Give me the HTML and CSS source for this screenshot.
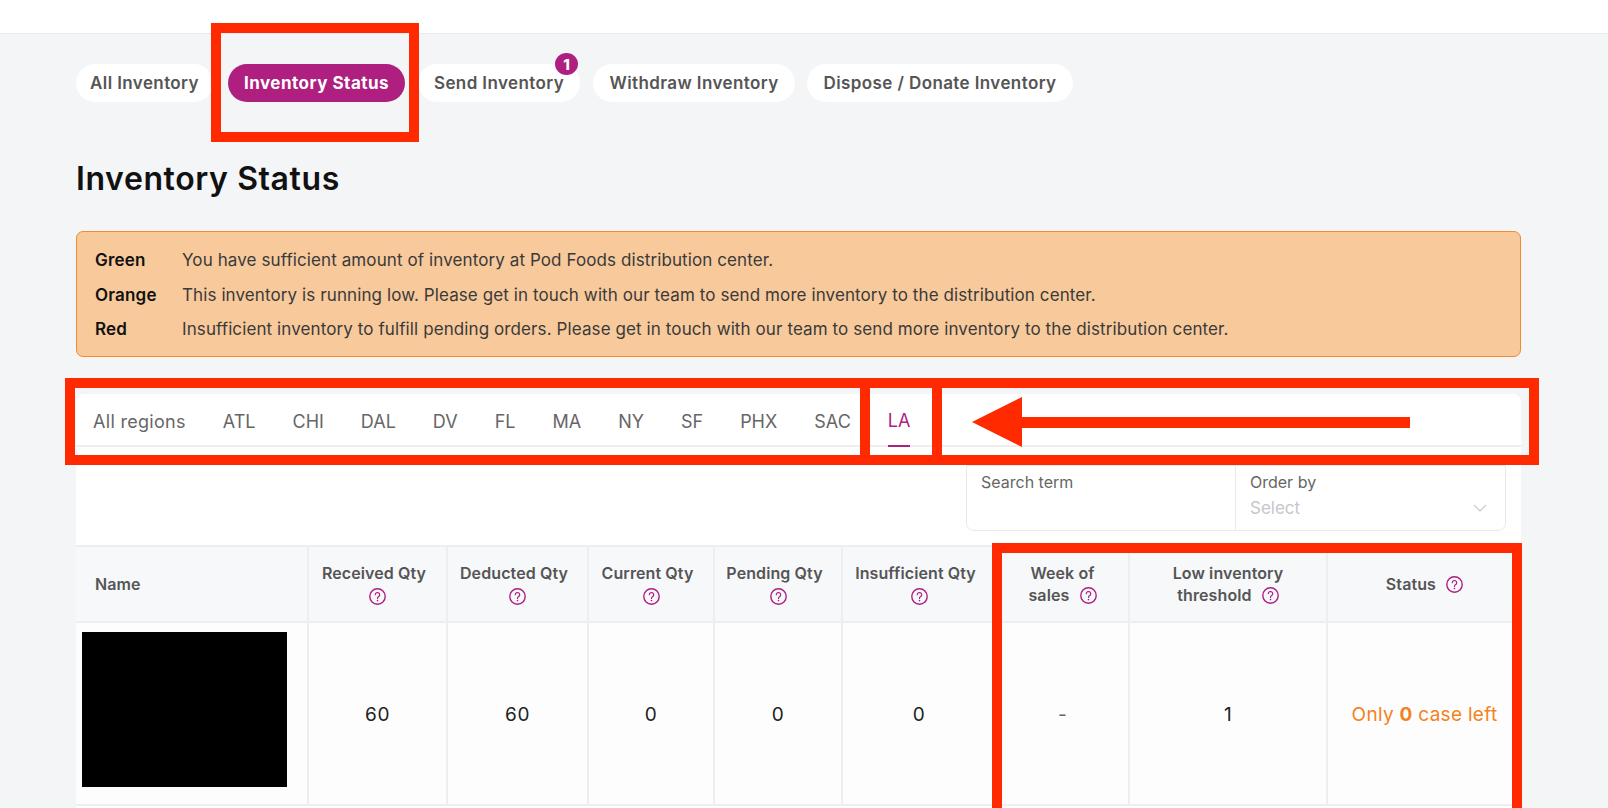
FILE: index.html
```html
<!DOCTYPE html>
<html lang="en">
<head>
<meta charset="utf-8">
<title>Inventory Status</title>
<link rel="stylesheet" href="styles.css">
</head>
<body>
<svg class="defs" width="0" height="0" aria-hidden="true">
  <symbol id="help" viewBox="0 0 17 17">
    <circle cx="8.5" cy="8.5" r="7.7" fill="none" stroke="currentColor" stroke-width="1.4"/>
    <path d="M6.3 6.7a2.2 2.2 0 1 1 3.4 1.9c-.8.5-1.2.9-1.2 1.8" fill="none" stroke="currentColor" stroke-width="1.2" stroke-linecap="round"/>
    <circle cx="8.5" cy="12.6" r=".8" fill="currentColor"/>
  </symbol>
</svg>
<header class="topbar"></header>
<main class="page">
  <nav class="pills">
    <a class="pill">All Inventory</a>
    <a class="pill pill-active">Inventory Status</a>
    <a class="pill pill-badged">Send Inventory<span class="badge">1</span></a>
    <a class="pill">Withdraw Inventory</a>
    <a class="pill">Dispose / Donate Inventory</a>
  </nav>
  <h1 class="title">Inventory Status</h1>
  <section class="legend">
    <div class="legend-row"><b class="legend-key">Green</b><span>You have sufficient amount of inventory at Pod Foods distribution center.</span></div>
    <div class="legend-row"><b class="legend-key">Orange</b><span>This inventory is running low. Please get in touch with our team to send more inventory to the distribution center.</span></div>
    <div class="legend-row"><b class="legend-key">Red</b><span>Insufficient inventory to fulfill pending orders. Please get in touch with our team to send more inventory to the distribution center.</span></div>
  </section>
  <section class="card">
    <div class="regions">
      <a class="region region-wide">All regions</a><a class="region">ATL</a><a class="region">CHI</a><a class="region">DAL</a><a class="region">DV</a><a class="region">FL</a><a class="region">MA</a><a class="region">NY</a><a class="region">SF</a><a class="region">PHX</a><a class="region">SAC</a><a class="region region-active">LA</a>
    </div>
    <div class="filters">
      <div class="filter filter-search"><label class="filter-label">Search term</label></div>
      <div class="filter filter-order">
        <label class="filter-label">Order by</label>
        <div class="filter-value">Select
          <svg class="chevron" width="14" height="8" viewBox="0 0 14 8"><path d="M1 1l6 6 6-6" fill="none" stroke="currentColor" stroke-width="1.1"/></svg>
        </div>
      </div>
    </div>
    <table class="grid">
      <colgroup>
        <col class="c-name"><col class="c-rec"><col class="c-ded"><col class="c-cur"><col class="c-pen"><col class="c-ins"><col class="c-week"><col class="c-low"><col class="c-status">
      </colgroup>
      <thead>
        <tr>
          <th class="th-name">Name</th>
          <th><span class="th-text">Received Qty</span><br><svg class="help"><use href="#help"/></svg></th>
          <th><span class="th-text">Deducted Qty</span><br><svg class="help"><use href="#help"/></svg></th>
          <th><span class="th-text">Current Qty</span><br><svg class="help"><use href="#help"/></svg></th>
          <th><span class="th-text">Pending Qty</span><br><svg class="help"><use href="#help"/></svg></th>
          <th><span class="th-text">Insufficient Qty</span><br><svg class="help"><use href="#help"/></svg></th>
          <th>Week of<br>sales <svg class="help help-inline"><use href="#help"/></svg></th>
          <th>Low inventory<br>threshold <svg class="help help-inline"><use href="#help"/></svg></th>
          <th>Status <svg class="help help-inline"><use href="#help"/></svg></th>
        </tr>
      </thead>
      <tbody>
        <tr>
          <td class="td-name"><div class="redacted"></div></td>
          <td>60</td><td>60</td><td>0</td><td>0</td><td>0</td><td class="muted">-</td><td>1</td>
          <td class="status">Only <b>0</b> case left</td>
        </tr>
      </tbody>
    </table>
  </section>
</main>
<div class="mark mark-pill"></div>
<div class="mark mark-regions"></div>
<div class="mark mark-la-left"></div>
<div class="mark mark-la-right"></div>
<div class="mark mark-shaft"></div>
<svg class="mark-head" width="50" height="50" viewBox="0 0 50 50"><path d="M50 0V50L0 25z" fill="#ff2a00"/></svg>
<div class="mark mark-cols"></div>
</body>
</html>
```
FILE: styles.css
```css
* { box-sizing: border-box; }
html, body { height: 808px; overflow: hidden; }
body {
  margin: 0;
  background: #f4f5f7;
  color: #222;
  font-family: Inter, "Liberation Sans", sans-serif;
  font-size: 16px;
  position: relative;
}
.defs { position: absolute; }
.topbar { height: 34px; background: #fff; border-bottom: 1px solid #e9eaec; }
.page { padding: 30px 87px 0 76px; }

.pills { display: flex; height: 38px; }
.pill {
  position: relative;
  display: flex;
  align-items: center;
  justify-content: center;
  height: 38px;
  border-radius: 19px;
  background: #fff;
  color: #555;
  font-size: 17px;
  font-weight: 600;
  letter-spacing: .4px;
  white-space: nowrap;
  margin-right: 13px;
}
.pill:nth-child(1) { width: 137px; margin-right: 15px; }
.pill:nth-child(2) { width: 177px; }
.pill:nth-child(3) { width: 162px; }
.pill:nth-child(4) { width: 202px; margin-right: 12px; }
.pill:nth-child(5) { width: 266px; }
.pill-active { background: #ae1f80; color: #fff; font-weight: 700; letter-spacing: .5px; }
.badge {
  position: absolute;
  top: -11px;
  right: 2px;
  width: 23px;
  height: 22px;
  border-radius: 50%;
  background: #ae1f80;
  color: #fff;
  font-size: 15px;
  font-weight: 800;
  letter-spacing: 0;
  display: flex;
  align-items: center;
  justify-content: center;
}

.title {
  margin: 57px 0 32px;
  color: #111;
  font-size: 32px;
  line-height: 40px;
  font-weight: 600;
  letter-spacing: .6px;
}

.legend {
  height: 126px;
  padding: 11px 18px 9px;
  background: #f7c99b;
  border: 1px solid #f58a2e;
  border-radius: 7px;
  color: #3a3a3a;
  font-size: 17px;
  letter-spacing: .1px;
}
.legend-row { display: flex; height: 34.5px; align-items: center; white-space: nowrap; }
.legend-key { width: 87px; color: #111; font-weight: 600; letter-spacing: .2px; }

.card {
  margin-top: 37px;
  height: 420px;
  background: #fff;
  border-radius: 8px 8px 0 0;
}
.regions {
  display: flex;
  gap: 37px;
  height: 53px;
  padding-left: 17px;
  border-bottom: 2px solid #eeeeef;
}
.region {
  display: flex;
  align-items: center;
  height: 53px;
  padding-top: 1px;
  color: #666;
  font-size: 18px;
  white-space: nowrap;
}
.region-wide { letter-spacing: .3px; }
.region-active { color: #ae1f80; border-bottom: 2px solid #ae1f80; }

.filters {
  display: flex;
  width: 540px;
  height: 66px;
  margin: 18px 15px 14px auto;
  border: 1px solid #e9e9ea;
  border-radius: 0 0 8px 8px;
}
.filter { padding: 6px 14px; }
.filter-search { width: 269px; border-right: 1px solid #e9e9ea; }
.filter-order { flex: 1; }
.filter-label { display: block; color: #666; font-size: 16px; line-height: 20px; }
.filter-value {
  display: flex;
  align-items: center;
  justify-content: space-between;
  margin-top: 6px;
  padding-right: 4px;
  color: #c9c5cc;
  font-size: 17px;
  line-height: 20px;
}
.chevron { color: #c9c5cc; }

.grid {
  width: 1445px;
  border-collapse: collapse;
  table-layout: fixed;
}
.c-name { width: 232px; }
.c-rec { width: 139px; }
.c-ded { width: 141px; }
.c-cur { width: 126px; }
.c-pen { width: 128px; }
.c-ins { width: 154px; }
.c-week { width: 133px; }
.c-low { width: 198px; }
.c-status { width: 194px; }
.grid th, .grid td { border: 2px solid #eeeeef; text-align: center; padding: 0; }
.grid th:first-child, .grid td:first-child { border-left: 0; }
.grid th:last-child, .grid td:last-child { border-right: 0; }
.grid th {
  height: 76px;
  background: #f7f8fa;
  color: #555;
  font-size: 16px;
  font-weight: 600;
  letter-spacing: .1px;
  line-height: 22px;
}
.grid td { height: 183px; padding-top: 2px; background: #fdfdfd; color: #222; font-size: 19px; letter-spacing: .5px; }
.grid .th-name { text-align: left; padding-left: 19px; }
.grid .td-name { text-align: left; padding: 0 0 8px 6px; }
.grid .muted { color: #666; }
.grid .status { color: #f58220; white-space: nowrap; letter-spacing: .3px; }
.status b { font-weight: 700; }
.th-text { margin-right: 7px; }
.redacted { width: 205px; height: 155px; background: #000; }
.help { display: inline-block; width: 17px; height: 17px; margin-top: 4px; color: #ae1f80; vertical-align: top; }
.help-inline { margin: 3px 0 0 6px; }

.mark, .mark-head { position: absolute; }
.mark { background: #ff2a00; }
.mark-pill { left: 211px; top: 23px; width: 208px; height: 119px; background: none; border: 10px solid #ff2a00; }
.mark-regions { left: 65px; top: 378px; width: 1474px; height: 87px; background: none; border: 10px solid #ff2a00; }
.mark-la-left { left: 860px; top: 388px; width: 10px; height: 67px; }
.mark-la-right { left: 932px; top: 388px; width: 10px; height: 67px; }
.mark-shaft { left: 1020px; top: 417px; width: 390px; height: 11px; }
.mark-head { left: 972px; top: 397px; }
.mark-cols { left: 992px; top: 543px; width: 530px; height: 280px; background: none; border: 10px solid #ff2a00; }
```
